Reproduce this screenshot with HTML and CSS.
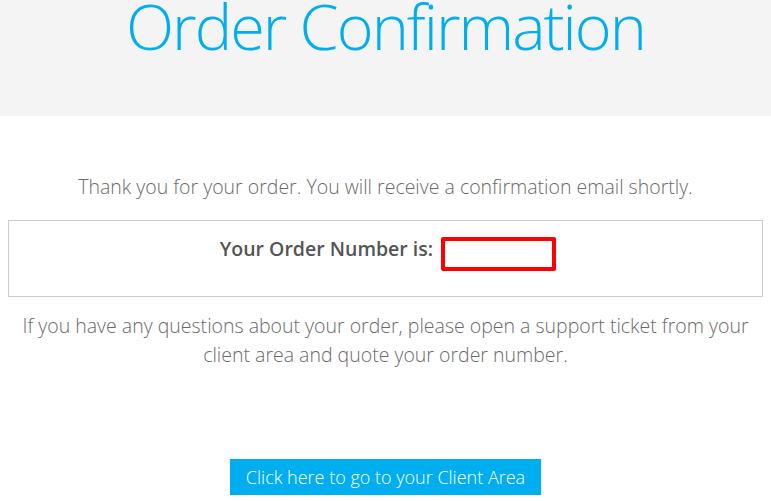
FILE: index.html
```html
<!DOCTYPE html>
<html lang="en">
<head>
    <meta charset="UTF-8">
    <meta name="viewport" content="width=device-width, initial-scale=1.0">
    <title>Order Confirmation</title>

    <link rel="stylesheet" href="styles.css">
</head>
<body>
<div class="header">
    <h1>Order Confirmation</h1>
</div>

<div class="content">
    <p class="thanks">Thank you for your order. You will receive a confirmation email shortly.</p>

    <div class="order-box">
        <span class="order-label">Your Order Number is:</span>
        <span class="order-number"></span>
    </div>

    <p class="note">If you have any questions about your order, please open a support ticket from your client area and quote your order number.</p>

    <div class="actions">
        <a class="btn" href="#">Click here to go to your Client Area</a>
    </div>
</div>
</body>
</html>
```

FILE: styles.css
```css
body {
    margin: 0;
    color: #6a6a6a;
    background-color: #fff;
    font-family: "Open Sans", Arial, sans-serif;
    font-weight: 300;
}

.header {
    background-color: #f4f4f4;
    height: 116px;
    text-align: center;
}

h1 {
    margin: 0;
    font-size: 63px;
    font-weight: 300;
    line-height: 51px;
    letter-spacing: -2px;
    color: #00aeef;
}

.content {
    padding: 0 8px;
    text-align: center;
}

.thanks {
    margin: 56px 0 18px;
    font-size: 19.5px;
    line-height: 30px;
}

.order-box {
    border: 1px solid #ccc;
    padding: 13px 0 0 5px;
    box-sizing: border-box;
    height: 77px;
    font-size: 19.5px;
    line-height: 30px;
}

.order-label {
    font-weight: 600;
    color: #555;
}

.order-number {
    display: inline-block;
    width: 107px;
    height: 26px;
    margin-left: 3px;
    border: 4px solid #f00;
    border-radius: 2px;
    vertical-align: -15px;
}

.note {
    margin: 14px 0 0;
    font-size: 19.5px;
    line-height: 29px;
}

.actions {
    margin-top: 90px;
}

.btn {
    display: inline-block;
    padding: 3px 16px;
    background-color: #00aeef;
    color: #fff;
    font-size: 18px;
    line-height: 30px;
    text-decoration: none;
}
```
